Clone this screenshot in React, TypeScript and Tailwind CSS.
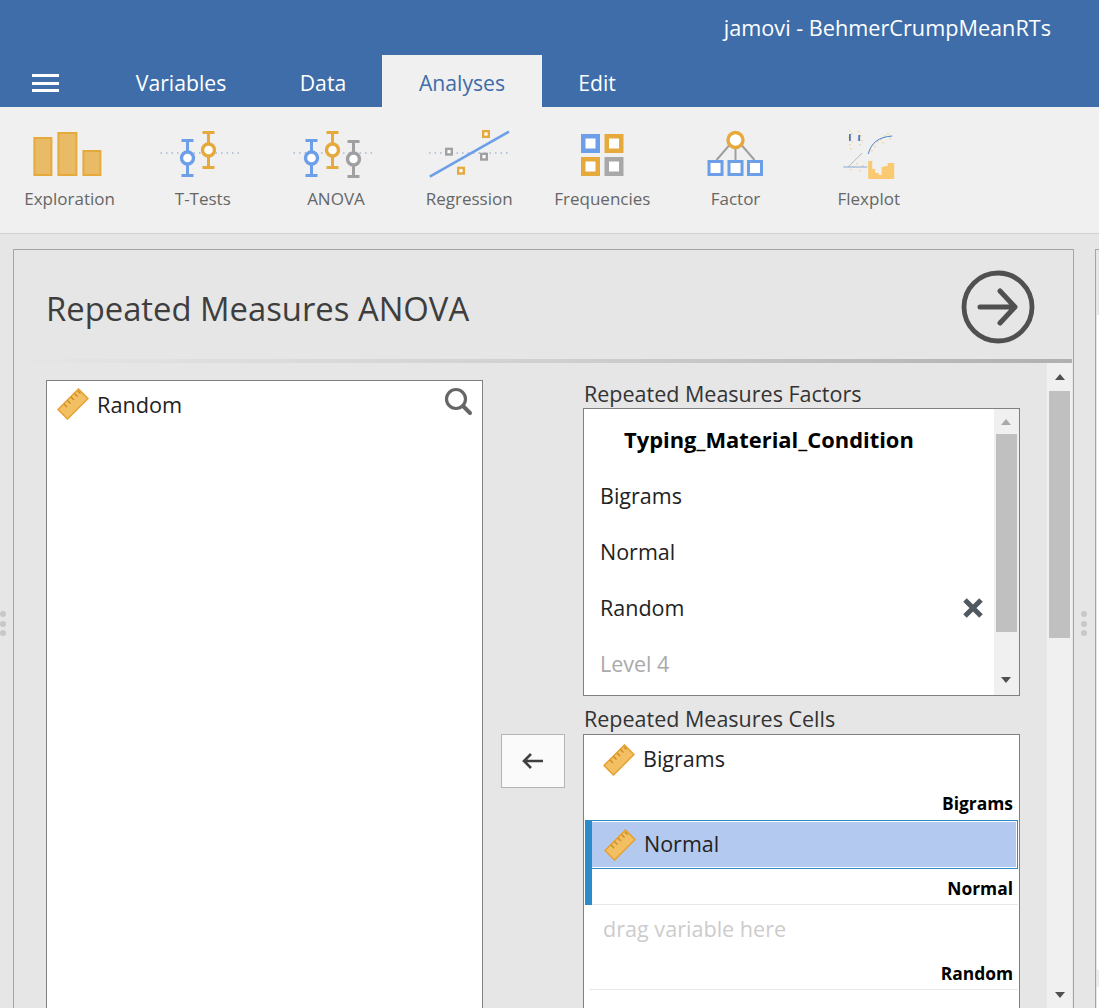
const font = "font-['Open_Sans','Noto_Sans',sans-serif]";

function Ruler({ className }: { className: string }) {
  return (
    <svg className={className} width="32" height="32" viewBox="0 0 32 32">
      <path d="M21.5 1 L31 10.5 L10.5 31 L1 21.5 Z" fill="#f2bf63" stroke="#e6a030" strokeWidth="1.5" />
      <path d="M7 16 L10 19 M10.5 12.5 L13.5 15.5 M14 9 L17 12 M17.5 5.5 L20.5 8.5 M21 3 L23.5 5.5" stroke="#c98a20" strokeWidth="1.2" fill="none" />
    </svg>
  );
}

function Pin({ x, top, bottom, cy, color }: { x: number; top: number; bottom: number; cy: number; color: string }) {
  return (
    <g stroke={color} fill="none">
      <path d={`M${x} ${top} V${bottom}`} strokeWidth="3" />
      <path d={`M${x - 6} ${top + 1.5} H${x + 6} M${x - 6} ${bottom - 1.5} H${x + 6}`} strokeWidth="3" />
      <circle cx={x} cy={cy} r="6" strokeWidth="3.4" fill="#fff" />
    </g>
  );
}

function Dots({ x1, x2 }: { x1: number; x2: number }) {
  return <path d={`M${x1} 29 H${x2}`} stroke="#7e9cc4" strokeWidth="1" strokeDasharray="1.5 4" fill="none" />;
}

function Sq({ x, y, s, c, w = 3 }: { x: number; y: number; s: number; c: string; w?: number }) {
  return <rect x={x + w / 2} y={y + w / 2} width={s - w} height={s - w} fill="#fff" stroke={c} strokeWidth={w} />;
}

const ICON = "h-[64px] w-[96px]";

function IconExploration() {
  return (
    <svg className={ICON} viewBox="1.6 -3 96 64">
      <g fill="#eabb66" stroke="#e6a93c" strokeWidth="2">
        <rect x="14" y="14" width="17" height="37" />
        <rect x="38" y="9" width="18" height="42" />
        <rect x="63" y="27" width="17" height="24" />
      </g>
    </svg>
  );
}
function IconTTests() {
  return (
    <svg className={ICON} viewBox="1.5 -3 96 64">
      <Dots x1={7} x2={89} />
      <Pin x={34} top={15} bottom={53} cy={34} color="#6d9fe8" />
      <Pin x={55} top={7} bottom={45} cy={26} color="#e6a93c" />
    </svg>
  );
}
function IconAnova() {
  return (
    <svg className={ICON} viewBox="1.5 -3 96 64">
      <Dots x1={7} x2={89} />
      <Pin x={25} top={15} bottom={53} cy={34} color="#6d9fe8" />
      <Pin x={46} top={7} bottom={45} cy={26} color="#e6a93c" />
      <Pin x={67} top={16} bottom={54} cy={35} color="#a0a0a0" />
    </svg>
  );
}
function IconRegression() {
  return (
    <svg className={ICON} viewBox="-2 -3 96 64">
      <Dots x1={6} x2={88} />
      <path d="M6.8 52.7 L86 7.7" stroke="#6d9fe8" strokeWidth="2.6" fill="none" />
      <Sq x={22} y={23.7} s={8} c="#a0a0a0" w={2.4} />
      <Sq x={34} y={42.7} s={8} c="#e6a93c" w={2.4} />
      <Sq x={59} y={6} s={8} c="#e6a93c" w={2.4} />
      <Sq x={57} y={28.7} s={8} c="#a0a0a0" w={2.4} />
    </svg>
  );
}
function IconFrequencies() {
  return (
    <svg className={ICON} viewBox="2 -3 96 64">
      <Sq x={29} y={10} s={19} c="#6d9fe8" w={4.5} />
      <Sq x={52.5} y={10} s={19} c="#e6a93c" w={4.5} />
      <Sq x={29} y={33} s={19} c="#e6a93c" w={4.5} />
      <Sq x={52.5} y={33} s={19} c="#a8a8a8" w={4.5} />
    </svg>
  );
}
function IconFactor() {
  return (
    <svg className={ICON} viewBox="0.5 -3 96 64">
      <path d="M48 24 V37 M42 21 L29 36 M54 21 L67 36" stroke="#a0a0a0" strokeWidth="2" fill="none" />
      <circle cx="48" cy="16" r="7.5" fill="#fff" stroke="#e6a93c" strokeWidth="3.4" />
      <Sq x={20} y={36} s={16} c="#6d9fe8" w={3} />
      <Sq x={40} y={36} s={16} c="#6d9fe8" w={3} />
      <Sq x={59.5} y={36} s={16} c="#6d9fe8" w={3} />
    </svg>
  );
}
function IconFlexplot() {
  const scatter = [
    [849, 130], [851, 133], [848, 137], [851, 141], [849, 144], [850, 148],
    [858, 131], [860, 135], [857, 139], [861, 140], [859, 144],
    [871, 150], [874, 146], [877, 141], [880, 139], [884, 135], [887, 133], [889, 138], [882, 142],
    [853, 166], [856, 163], [859, 170], [862, 165], [850, 169],
  ];
  return (
    <svg className={ICON} viewBox="820.8 121 96 64">
      {scatter.map(([x, y], i) => (
        <rect key={i} x={x} y={y} width="1.4" height="1.4" fill="#f5cd90" />
      ))}
      <path d="M849.7 134 V141 M859 135 V141" stroke="#4a78b5" strokeWidth="1.8" fill="none" />
      <path d="M868 154 C871 143 878 137 892 136" stroke="#4a84c5" strokeWidth="1" fill="none" />
      <path d="M848 167 L862 153" stroke="#a8a8a8" strokeWidth="0.8" fill="none" />
      <path d="M843 167 H867" stroke="#7ba3d8" strokeWidth="0.9" fill="none" />
      <path d="M868 179 V161 H872 V169 H875 V173 H878.5 V175 H881.5 V167 H884 V166 H887.5 V163 H894 V179 Z" fill="#fbc96f" />
    </svg>
  );
}

const tools: [string, () => React.ReactElement][] = [
  ["Exploration", IconExploration],
  ["T-Tests", IconTTests],
  ["ANOVA", IconAnova],
  ["Regression", IconRegression],
  ["Frequencies", IconFrequencies],
  ["Factor", IconFactor],
  ["Flexplot", IconFlexplot],
];

function Arrow({ up, light }: { up?: boolean; light?: boolean }) {
  return (
    <div
      className={`h-0 w-0 border-x-[5.5px] border-x-transparent ${up ? "border-b-[6px]" : "border-t-[6px]"} ${
        up ? (light ? "border-b-[#a8a8a8]" : "border-b-[#505050]") : "border-t-[#505050]"
      }`}
    />
  );
}

function Grip() {
  return (
    <div className="flex flex-col items-center gap-[3.5px]">
      <div className="h-[6px] w-[6px] rounded-full bg-[#c8c8c8]" />
      <div className="h-[6px] w-[6px] rounded-full bg-[#c8c8c8]" />
      <div className="h-[6px] w-[6px] rounded-full bg-[#c8c8c8]" />
    </div>
  );
}

function Cell({ name, label, selected, empty }: { name: string; label: string; selected?: boolean; empty?: boolean }) {
  return (
    <div className="relative h-[85px] shrink-0 pl-[4px] pr-[1px]">
      <div className={`ml-[1px] h-full border-b border-[#e8e8e8] ${label === "Bigrams" ? "border-b-0" : ""}`}>
        <div
          className={
            selected
              ? "flex h-[49px] items-center border border-[#2f8ac6] bg-[#b4c9ef] pl-[14px] outline outline-1 outline-offset-[-2px] outline-white"
              : "flex h-[48px] items-center pl-[14px] pt-[1px]"
          }
        >
          {empty ? (
            <span className="text-[21.6px] text-[#cccccc]">{name}</span>
          ) : (
            <>
              <Ruler className="h-[32px] w-[32px] shrink-0" />
              <span className="ml-[8px] text-[21.5px] text-[#222]">{name}</span>
            </>
          )}
        </div>
        <div
          className={`flex items-start justify-end pr-[5px] text-[17.4px] font-bold leading-[24px] text-black ${
            selected ? "h-[35px] pt-[7px]" : "h-[36px] pt-[8px]"
          }`}
        >
          {label}
        </div>
      </div>
      {selected && <div className="absolute bottom-0 left-[1px] top-0 w-[7px] bg-[#2e8bc9]" />}
    </div>
  );
}

export default function App() {
  return (
    <div className={`flex h-[1008px] w-[1099px] flex-col overflow-hidden bg-[#e6e6e6] ${font}`}>
      <div className="flex h-[55px] shrink-0 items-center justify-end bg-[#3e6da9] pr-[48px] pt-[2px] text-[21.66px] text-white">
        jamovi - BehmerCrumpMeanRTs
      </div>
      <div className="flex h-[52px] shrink-0 items-stretch bg-[#3e6da9] text-[21.2px] text-white">
        <div className="flex w-[98px] items-center pl-[32px]">
          <div className="flex w-[27px] flex-col gap-[4.5px] pt-[4px]">
            <div className="h-[3px] bg-white" />
            <div className="h-[3px] bg-white" />
            <div className="h-[3px] bg-white" />
          </div>
        </div>
        <div className="flex w-[166px] items-center justify-center pt-[4px]">Variables</div>
        <div className="flex w-[118px] items-center justify-center pt-[4px]">Data</div>
        <div className="flex w-[160px] items-center justify-center bg-[#f0f0f0] pt-[4px] text-[#3e6da9]">Analyses</div>
        <div className="flex w-[110px] items-center justify-center pt-[4px]">Edit</div>
      </div>
      <div className="flex h-[127px] shrink-0 items-start border-b border-[#d2d2d2] bg-[#f0f0f0] pl-[3px] pt-[14px]">
        {tools.map(([name, Icon]) => (
          <div key={name} className="flex w-[133.2px] flex-col items-center">
            <Icon />
            <div className="mt-[2px] text-[17px] leading-[24px] text-[#666]">{name}</div>
          </div>
        ))}
      </div>
      <div className="flex min-h-0 flex-1 items-stretch pt-[15px]">
        <div className="flex w-[13px] shrink-0 items-center justify-start pb-[10px]">
          <Grip />
        </div>
        <div className="flex w-[1061px] shrink-0 flex-col border border-b-0 border-[#a6a6a6] bg-[#e6e6e6]">
          <div className="flex h-[109px] shrink-0 items-center justify-between pl-[32px] pr-[38px]">
            <div className="pt-[9px] text-[32.8px] text-[#3e3e3e]">Repeated Measures ANOVA</div>
            <svg className="mt-[4px] h-[74px] w-[74px]" viewBox="0 0 74 74">
              <circle cx="37" cy="37" r="34" fill="none" stroke="#505050" strokeWidth="4.8" />
              <path d="M19 37 H53 M39 21 L54 37 L39 53" fill="none" stroke="#505050" strokeWidth="5" strokeLinecap="round" strokeLinejoin="round" />
            </svg>
          </div>
          <div className="mr-[1px] h-[4px] shrink-0 bg-gradient-to-r from-[#e6e6e6] via-[#d0d0d0] to-[#b0b0b0]" />
          <div className="flex min-h-0 flex-1">
            <div className="flex min-w-0 flex-1 pl-[32px] pt-[17px]">
              <div className="flex w-[437px] shrink-0 items-start justify-between self-stretch border border-b-0 border-[#808080] bg-white pl-[10px] pr-[9px] pt-[6px]">
                <div className="flex items-center">
                  <Ruler className="h-[32px] w-[32px]" />
                  <span className="ml-[8px] pt-[2px] text-[21.7px] text-[#222]">Random</span>
                </div>
                <svg className="-mt-[1px]" width="30" height="30" viewBox="0 0 30 30">
                  <circle cx="13" cy="13" r="9.5" fill="none" stroke="#666" strokeWidth="3.2" />
                  <path d="M20 20 L27 27" stroke="#666" strokeWidth="4" strokeLinecap="round" />
                </svg>
              </div>
              <div className="flex w-[100px] shrink-0 justify-center pt-[354px]">
                <div className="flex h-[54px] w-[64px] items-center justify-center border border-[#b4b4b4] bg-[#fafafa]">
                  <svg width="24" height="20" viewBox="0 0 24 20">
                    <path d="M22 10 H3 M10 3 L3 10 L10 17" fill="none" stroke="#404040" strokeWidth="2.6" />
                  </svg>
                </div>
              </div>
              <div className="flex w-[437px] shrink-0 flex-col">
                <div className="ml-[1px] h-[28px] whitespace-nowrap text-[21.5px] leading-[28px] text-[#333]">Repeated Measures Factors</div>
                <div className="flex h-[288px] shrink-0 border border-[#808080] bg-white">
                  <div className="min-w-0 flex-1">
                    <div className="flex h-[56px] items-center pl-[40px] pt-[6px] text-[21.9px] font-bold text-black">
                      Typing_Material_Condition
                    </div>
                    <div className="flex h-[56px] items-center pl-[16px] pt-[6px] text-[21.5px] text-[#222]">Bigrams</div>
                    <div className="flex h-[56px] items-center pl-[16px] pt-[6px] text-[21.5px] text-[#222]">Normal</div>
                    <div className="flex h-[56px] items-center justify-between pl-[16px] pr-[10px] pt-[6px] text-[21.5px] text-[#222]">
                      Random
                      <svg className="mt-[0px]" width="22" height="22" viewBox="0 0 22 22">
                        <path d="M3 3 L19 19 M19 3 L3 19" stroke="#505860" strokeWidth="5" />
                      </svg>
                    </div>
                    <div className="flex h-[56px] items-center pl-[16px] pt-[6px] text-[21.5px] text-[#aaaaaa]">Level 4</div>
                  </div>
                  <div className="flex w-[25px] shrink-0 flex-col items-center bg-[#f0f0f0]">
                    <div className="flex h-[25px] w-full shrink-0 items-center justify-center pr-[1px]"><Arrow up light /></div>
                    <div className="h-[198px] w-[21px] shrink-0 bg-[#c0c0c0]" />
                    <div className="flex-1" />
                    <div className="flex h-[30px] w-full shrink-0 items-center justify-center pr-[1px]"><Arrow /></div>
                  </div>
                </div>
                <div className="ml-[1px] h-[38px] shrink-0 whitespace-nowrap pt-[9px] text-[21.5px] leading-[28px] text-[#333]">Repeated Measures Cells</div>
                <div className="min-h-0 flex-1 overflow-hidden border border-b-0 border-[#808080] bg-white">
                  <Cell name="Bigrams" label="Bigrams" />
                  <Cell name="Normal" label="Normal" selected />
                  <Cell name="drag variable here" label="Random" empty />
                </div>
              </div>
              <div className="flex-1" />
            </div>
            <div className="mr-[1px] flex w-[25px] shrink-0 flex-col items-center bg-[#f0f0f0]">
              <div className="flex h-[28px] w-full shrink-0 items-center justify-center"><Arrow up /></div>
              <div className="h-[247px] w-[21px] shrink-0 bg-[#c0c0c0]" />
              <div className="flex-1" />
              <div className="flex h-[26px] w-full shrink-0 items-center justify-center"><Arrow /></div>
            </div>
          </div>
        </div>
        <div className="flex w-[21px] shrink-0 items-center justify-center pb-[10px] pr-[2px]"><Grip /></div>
        <div className="flex flex-1 flex-col border-l border-t border-[#a6a6a6] pl-[1px]">
          <div className="h-[65px] shrink-0" />
          <div className="h-[655px] shrink-0 bg-white" />
          <div className="h-[17px] shrink-0 bg-[#ececec]" />
          <div className="flex-1 bg-white" />
        </div>
      </div>
    </div>
  );
}
